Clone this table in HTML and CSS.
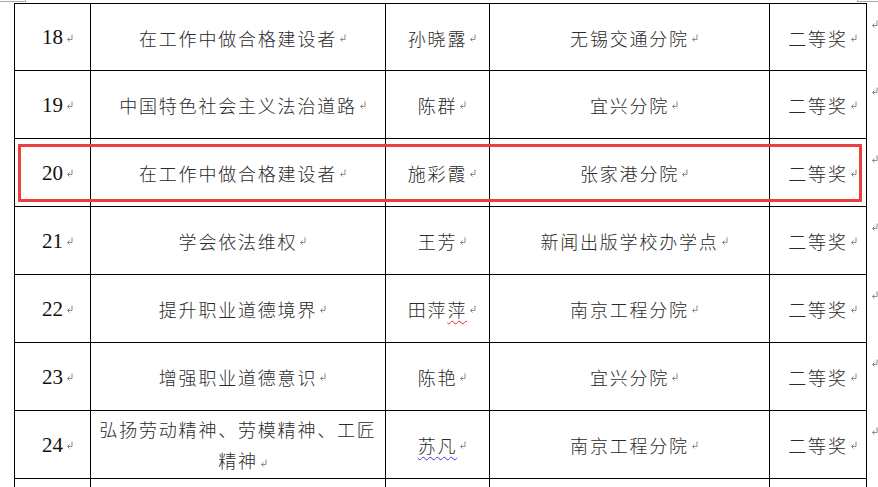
FILE: index.html
```html
<!DOCTYPE html>
<html lang="zh">
<head>
<meta charset="utf-8">
<title>获奖名单</title>
<link rel="stylesheet" href="styles.css">
</head>
<body>
<div class="page">
  <div class="corners"><span class="corner-l"></span><span class="corner-r"></span></div>

  <div class="row first">
    <div class="c num">18<span class="pm n"><svg viewBox="0 0 7 8" width="7" height="8"><path d="M6 0.5V5.5H1.5M3.5 3.5L1.5 5.5L3.5 7.5"/></svg></span></div>
    <div class="c">在工作中做合格建设者<span class="pm"><svg viewBox="0 0 7 8" width="7" height="8"><path d="M6 0.5V5.5H1.5M3.5 3.5L1.5 5.5L3.5 7.5"/></svg></span></div>
    <div class="c">孙晓露<span class="pm"><svg viewBox="0 0 7 8" width="7" height="8"><path d="M6 0.5V5.5H1.5M3.5 3.5L1.5 5.5L3.5 7.5"/></svg></span></div>
    <div class="c">无锡交通分院<span class="pm"><svg viewBox="0 0 7 8" width="7" height="8"><path d="M6 0.5V5.5H1.5M3.5 3.5L1.5 5.5L3.5 7.5"/></svg></span></div>
    <div class="c e">二等奖<span class="pm"><svg viewBox="0 0 7 8" width="7" height="8"><path d="M6 0.5V5.5H1.5M3.5 3.5L1.5 5.5L3.5 7.5"/></svg></span></div>
    <div class="end"><svg viewBox="0 0 7 8" width="7" height="8"><path d="M6 0.5V5.5H1.5M3.5 3.5L1.5 5.5L3.5 7.5"/></svg></div>
  </div>

  <div class="row">
    <div class="c num">19<span class="pm n"><svg viewBox="0 0 7 8" width="7" height="8"><path d="M6 0.5V5.5H1.5M3.5 3.5L1.5 5.5L3.5 7.5"/></svg></span></div>
    <div class="c">中国特色社会主义法治道路<span class="pm"><svg viewBox="0 0 7 8" width="7" height="8"><path d="M6 0.5V5.5H1.5M3.5 3.5L1.5 5.5L3.5 7.5"/></svg></span></div>
    <div class="c">陈群<span class="pm"><svg viewBox="0 0 7 8" width="7" height="8"><path d="M6 0.5V5.5H1.5M3.5 3.5L1.5 5.5L3.5 7.5"/></svg></span></div>
    <div class="c">宜兴分院<span class="pm"><svg viewBox="0 0 7 8" width="7" height="8"><path d="M6 0.5V5.5H1.5M3.5 3.5L1.5 5.5L3.5 7.5"/></svg></span></div>
    <div class="c e">二等奖<span class="pm"><svg viewBox="0 0 7 8" width="7" height="8"><path d="M6 0.5V5.5H1.5M3.5 3.5L1.5 5.5L3.5 7.5"/></svg></span></div>
    <div class="end"><svg viewBox="0 0 7 8" width="7" height="8"><path d="M6 0.5V5.5H1.5M3.5 3.5L1.5 5.5L3.5 7.5"/></svg></div>
  </div>

  <div class="row">
    <div class="c num">20<span class="pm n"><svg viewBox="0 0 7 8" width="7" height="8"><path d="M6 0.5V5.5H1.5M3.5 3.5L1.5 5.5L3.5 7.5"/></svg></span></div>
    <div class="c">在工作中做合格建设者<span class="pm"><svg viewBox="0 0 7 8" width="7" height="8"><path d="M6 0.5V5.5H1.5M3.5 3.5L1.5 5.5L3.5 7.5"/></svg></span></div>
    <div class="c">施彩霞<span class="pm"><svg viewBox="0 0 7 8" width="7" height="8"><path d="M6 0.5V5.5H1.5M3.5 3.5L1.5 5.5L3.5 7.5"/></svg></span></div>
    <div class="c">张家港分院<span class="pm"><svg viewBox="0 0 7 8" width="7" height="8"><path d="M6 0.5V5.5H1.5M3.5 3.5L1.5 5.5L3.5 7.5"/></svg></span></div>
    <div class="c e">二等奖<span class="pm"><svg viewBox="0 0 7 8" width="7" height="8"><path d="M6 0.5V5.5H1.5M3.5 3.5L1.5 5.5L3.5 7.5"/></svg></span></div>
    <div class="end"><svg viewBox="0 0 7 8" width="7" height="8"><path d="M6 0.5V5.5H1.5M3.5 3.5L1.5 5.5L3.5 7.5"/></svg></div>
  </div>

  <div class="row">
    <div class="c num">21<span class="pm n"><svg viewBox="0 0 7 8" width="7" height="8"><path d="M6 0.5V5.5H1.5M3.5 3.5L1.5 5.5L3.5 7.5"/></svg></span></div>
    <div class="c">学会依法维权<span class="pm"><svg viewBox="0 0 7 8" width="7" height="8"><path d="M6 0.5V5.5H1.5M3.5 3.5L1.5 5.5L3.5 7.5"/></svg></span></div>
    <div class="c">王芳<span class="pm"><svg viewBox="0 0 7 8" width="7" height="8"><path d="M6 0.5V5.5H1.5M3.5 3.5L1.5 5.5L3.5 7.5"/></svg></span></div>
    <div class="c">新闻出版学校办学点<span class="pm"><svg viewBox="0 0 7 8" width="7" height="8"><path d="M6 0.5V5.5H1.5M3.5 3.5L1.5 5.5L3.5 7.5"/></svg></span></div>
    <div class="c e">二等奖<span class="pm"><svg viewBox="0 0 7 8" width="7" height="8"><path d="M6 0.5V5.5H1.5M3.5 3.5L1.5 5.5L3.5 7.5"/></svg></span></div>
    <div class="end"><svg viewBox="0 0 7 8" width="7" height="8"><path d="M6 0.5V5.5H1.5M3.5 3.5L1.5 5.5L3.5 7.5"/></svg></div>
  </div>

  <div class="row">
    <div class="c num">22<span class="pm n"><svg viewBox="0 0 7 8" width="7" height="8"><path d="M6 0.5V5.5H1.5M3.5 3.5L1.5 5.5L3.5 7.5"/></svg></span></div>
    <div class="c">提升职业道德境界<span class="pm"><svg viewBox="0 0 7 8" width="7" height="8"><path d="M6 0.5V5.5H1.5M3.5 3.5L1.5 5.5L3.5 7.5"/></svg></span></div>
    <div class="c">田萍<span class="sp-red">萍</span><span class="pm"><svg viewBox="0 0 7 8" width="7" height="8"><path d="M6 0.5V5.5H1.5M3.5 3.5L1.5 5.5L3.5 7.5"/></svg></span></div>
    <div class="c">南京工程分院<span class="pm"><svg viewBox="0 0 7 8" width="7" height="8"><path d="M6 0.5V5.5H1.5M3.5 3.5L1.5 5.5L3.5 7.5"/></svg></span></div>
    <div class="c e">二等奖<span class="pm"><svg viewBox="0 0 7 8" width="7" height="8"><path d="M6 0.5V5.5H1.5M3.5 3.5L1.5 5.5L3.5 7.5"/></svg></span></div>
    <div class="end"><svg viewBox="0 0 7 8" width="7" height="8"><path d="M6 0.5V5.5H1.5M3.5 3.5L1.5 5.5L3.5 7.5"/></svg></div>
  </div>

  <div class="row">
    <div class="c num">23<span class="pm n"><svg viewBox="0 0 7 8" width="7" height="8"><path d="M6 0.5V5.5H1.5M3.5 3.5L1.5 5.5L3.5 7.5"/></svg></span></div>
    <div class="c">增强职业道德意识<span class="pm"><svg viewBox="0 0 7 8" width="7" height="8"><path d="M6 0.5V5.5H1.5M3.5 3.5L1.5 5.5L3.5 7.5"/></svg></span></div>
    <div class="c">陈艳<span class="pm"><svg viewBox="0 0 7 8" width="7" height="8"><path d="M6 0.5V5.5H1.5M3.5 3.5L1.5 5.5L3.5 7.5"/></svg></span></div>
    <div class="c">宜兴分院<span class="pm"><svg viewBox="0 0 7 8" width="7" height="8"><path d="M6 0.5V5.5H1.5M3.5 3.5L1.5 5.5L3.5 7.5"/></svg></span></div>
    <div class="c e">二等奖<span class="pm"><svg viewBox="0 0 7 8" width="7" height="8"><path d="M6 0.5V5.5H1.5M3.5 3.5L1.5 5.5L3.5 7.5"/></svg></span></div>
    <div class="end"><svg viewBox="0 0 7 8" width="7" height="8"><path d="M6 0.5V5.5H1.5M3.5 3.5L1.5 5.5L3.5 7.5"/></svg></div>
  </div>

  <div class="row">
    <div class="c num">24<span class="pm n"><svg viewBox="0 0 7 8" width="7" height="8"><path d="M6 0.5V5.5H1.5M3.5 3.5L1.5 5.5L3.5 7.5"/></svg></span></div>
    <div class="c multi"><p>弘扬劳动精神、劳模精神、工匠<br>精神<span class="pm"><svg viewBox="0 0 7 8" width="7" height="8"><path d="M6 0.5V5.5H1.5M3.5 3.5L1.5 5.5L3.5 7.5"/></svg></span></p></div>
    <div class="c"><span class="sp-blue">苏凡</span><span class="pm"><svg viewBox="0 0 7 8" width="7" height="8"><path d="M6 0.5V5.5H1.5M3.5 3.5L1.5 5.5L3.5 7.5"/></svg></span></div>
    <div class="c">南京工程分院<span class="pm"><svg viewBox="0 0 7 8" width="7" height="8"><path d="M6 0.5V5.5H1.5M3.5 3.5L1.5 5.5L3.5 7.5"/></svg></span></div>
    <div class="c e">二等奖<span class="pm"><svg viewBox="0 0 7 8" width="7" height="8"><path d="M6 0.5V5.5H1.5M3.5 3.5L1.5 5.5L3.5 7.5"/></svg></span></div>
    <div class="end"><svg viewBox="0 0 7 8" width="7" height="8"><path d="M6 0.5V5.5H1.5M3.5 3.5L1.5 5.5L3.5 7.5"/></svg></div>
  </div>

  <div class="row tail">
    <div class="c"></div>
    <div class="c"></div>
    <div class="c"></div>
    <div class="c"></div>
    <div class="c e"></div>
    <div class="end"></div>
  </div>

  <div class="hl"></div>
</div>
</body>
</html>
```

FILE: styles.css
```css
html, body {
  margin: 0;
  padding: 0;
  background: #fff;
}

body {
  overflow: hidden;
  font-family: "Noto Sans CJK SC", "Noto Sans", sans-serif;
  color: #2a2a2a;
}

.page {
  position: relative;
  padding-left: 14px;
  width: 864px;
  height: 487px;
  overflow: hidden;
}

.corners {
  display: flex;
  justify-content: space-between;
  height: 3px;
  margin-left: -14px;
}

.corner-l {
  display: block;
  width: 25px;
  height: 1px;
  border-bottom: 1px solid #a9a9a9;
  border-right: 1px solid #a9a9a9;
}

.corner-r {
  display: block;
  width: 20px;
  height: 1px;
  border-bottom: 1px solid #a9a9a9;
  border-left: 1px solid #a9a9a9;
}

.row {
  display: grid;
  grid-template-columns: 76px 295px 104px 280px 98px 11px;
  height: 68px;
}

.row.first {
  height: 67px;
}

.row.tail {
  height: 20px;
}

.c {
  border-left: 1px solid #000;
  border-top: 1px solid #000;
  display: flex;
  align-items: center;
  justify-content: center;
  text-align: center;
  font-size: 18px;
  font-weight: 300;
  letter-spacing: 1.8px;
  white-space: nowrap;
  padding-top: 1px;
}

.c.e {
  border-right: 1px solid #000;
}

.c.num {
  font-family: "Liberation Serif", serif;
  font-size: 21px;
  font-weight: 400;
  letter-spacing: 0;
  color: #111;
}

.c.multi p {
  margin: 0;
  line-height: 31px;
}

.pm {
  display: inline-block;
  width: 7px;
  height: 8px;
  margin-left: 2px;
  margin-right: -9px;
  vertical-align: 1px;
  line-height: 0;
}

.pm.n {
  margin-left: 3px;
  margin-right: -10px;
  vertical-align: 2px;
}

.pm svg,
.end svg {
  display: block;
  fill: none;
  stroke: #8a8a8a;
  stroke-width: 1;
}

.end {
  padding: 17px 0 0 4px;
}

.sp-red {
  text-decoration: underline wavy #e52b2b;
  text-decoration-thickness: 1px;
  text-underline-offset: 3px;
}

.sp-blue {
  text-decoration: underline wavy #3b3bdc;
  text-decoration-thickness: 1px;
  text-underline-offset: 3px;
}

.hl {
  position: absolute;
  left: 18px;
  top: 144px;
  width: 844px;
  height: 58px;
  box-sizing: border-box;
  border: 3px solid #ef3d3d;
}
```
